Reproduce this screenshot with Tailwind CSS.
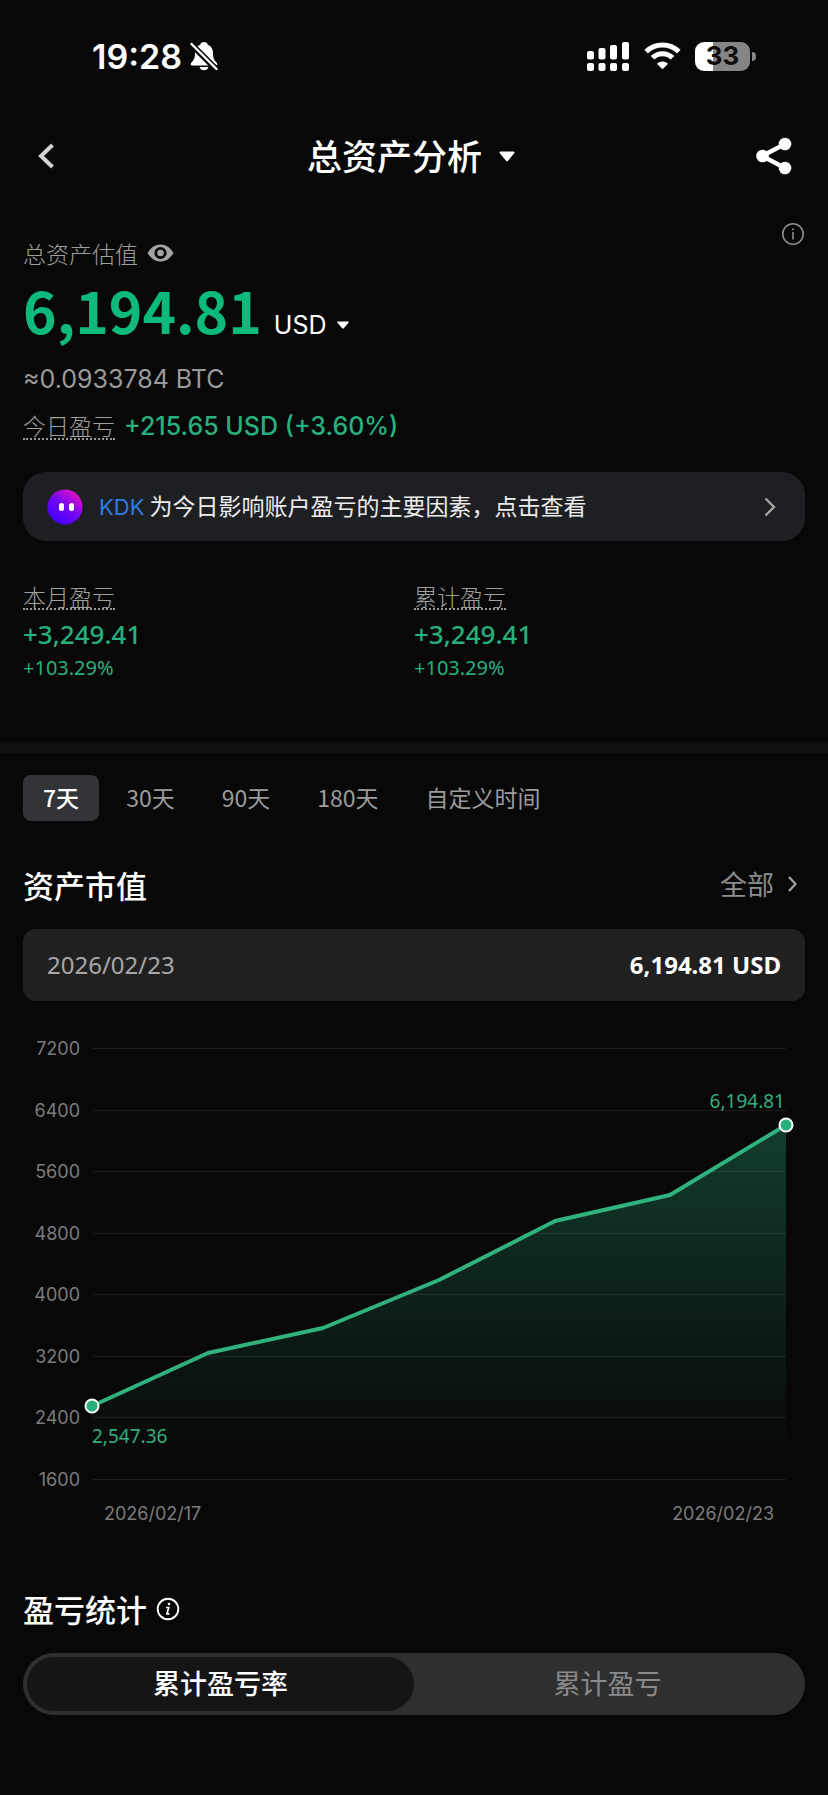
<!DOCTYPE html>
<html lang="zh-CN">
<head>
    <meta charset="UTF-8">
    <title>总资产分析</title>
    <meta name="viewport" content="width=device-width, initial-scale=1.0">

    <!-- Tailwind CSS CDN -->
    <script src="https://cdn.jsdelivr.net/npm/@tailwindcss/browser@4"></script>
</head>
<body class="min-h-screen bg-[#080808] text-white font-['Noto_Sans_CJK_SC',sans-serif]">

    <!-- Status bar -->
    <div class="flex h-28 items-center justify-between pl-[92px] pr-[72px]">
        <div class="flex items-center gap-2">
            <span class="pt-[2px] font-['Inter',sans-serif] text-[34px] leading-10 font-semibold">19:28</span>
            <svg class="h-[30px] w-[28px]" viewBox="0 0 28 30" fill="none">
                <path d="M14 1c-2 0-3.400 1.100-3.800 2.700C6.600 5.100 5 8 5 12c0 5-.9 6.800-3.500 9.500C.3 22.700.5 24.500 2 24.500h24c1.500 0 1.700-1.800.5-3C23.900 18.800 23 17 23 12c0-4-1.600-6.900-5.200-8.300C17.400 2.100 16 1 14 1z" fill="#fff"/>
                <path d="M9.500 26h9c-.5 2-2.200 3.300-4.500 3.300S10 28 9.500 26z" fill="#fff"/>
                <path d="M0 2l27 27" stroke="#080808" stroke-width="6"/>
                <path d="M1.500 3l25 25" stroke="#fff" stroke-width="2.400" stroke-linecap="round"/>
            </svg>
        </div>
        <div class="flex items-center gap-[14px]">
            <svg class="h-[30px] w-[43px]" viewBox="0 0 43 30" fill="#fff">
                <rect x="0" y="10" width="7" height="8.500" rx="2"/>
                <rect x="11.500" y="7" width="7" height="11.500" rx="2"/>
                <rect x="23" y="4" width="7" height="14.500" rx="2"/>
                <rect x="35" y="1" width="7" height="17.500" rx="2"/>
                <rect x="0" y="22" width="7" height="8" rx="2"/>
                <rect x="11.500" y="22" width="7" height="8" rx="2"/>
                <rect x="23" y="22" width="7" height="8" rx="2"/>
                <rect x="35" y="22" width="7" height="8" rx="2"/>
            </svg>
            <svg class="h-[28px] w-[37px]" viewBox="0 0 37 28" fill="none" stroke="#fff" stroke-width="5">
                <path d="M2.200 9.600a23.300 23.300 0 0 1 32.600 0"/>
                <path d="M8.500 15.800a14.200 14.200 0 0 1 20 0"/>
                <path d="M18.500 27.300l-5.600-5.500a8 8 0 0 1 11.200 0z" fill="#fff" stroke="none"/>
            </svg>
            <div class="flex items-center gap-[2px]">
                <div class="flex h-[29px] w-[55px] items-center justify-center rounded-[9px] bg-linear-to-r from-white from-33% to-[#858585] to-33% font-['Inter',sans-serif] text-[26px] leading-none font-bold text-[#0c0c0c]">33</div>
                <div class="h-[9px] w-[4px] rounded-r-full bg-[#858585]"></div>
            </div>
        </div>
    </div>

    <!-- Header -->
    <header class="flex h-22 items-center justify-between px-9">
        <button class="w-[30px]" aria-label="返回">
            <svg class="h-7 w-[22px]" viewBox="0 0 22 28" fill="none" stroke="#d2d2d2" stroke-width="4">
                <path d="M16.500 3L5 14l11.500 11"/>
            </svg>
        </button>
        <label class="flex items-center gap-4">
            <select aria-label="分析类型" class="appearance-none bg-transparent pb-[2px] text-[35px] leading-[48px] font-medium outline-none">
                <option>总资产分析</option>
            </select>
            <svg class="h-[11px] w-4" viewBox="0 0 16 11"><path d="M1.500.5h13c1 0 1.300 1 .7 1.700l-6.200 7.500c-.6.700-1.400.7-2 0L.8 2.200C.2 1.500.5.500 1.500.5z" fill="#fff"/></svg>
        </label>
        <button aria-label="分享">
            <svg class="h-[38px] w-9" viewBox="0 0 36 38" fill="#fff">
                <path d="M29 7L6 19l23 12" fill="none" stroke="#fff" stroke-width="4.500"/>
                <circle cx="6.500" cy="19" r="6.300"/>
                <circle cx="29" cy="7" r="6.300"/>
                <circle cx="29" cy="31" r="6.300"/>
            </svg>
        </button>
    </header>

    <!-- Total assets -->
    <section class="px-[23px] pt-[22px]">
        <div class="flex items-start justify-between">
            <div class="pt-[15px]">
                <div class="flex items-center gap-[9px] text-[23px] leading-8 font-light text-[#a0a0a0]">
                    总资产估值
                    <button aria-label="隐藏金额">
                        <svg class="h-[18px] w-[27px]" viewBox="0 0 27 18">
                            <path d="M.5 9C4 3.300 8.400.5 13.500.5S23 3.300 26.500 9C23 14.700 18.600 17.500 13.500 17.500S4 14.700.5 9z" fill="#a3a3a5"/>
                            <circle cx="13.500" cy="9" r="4.700" fill="none" stroke="#080808" stroke-width="2.800"/>
                        </svg>
                    </button>
                </div>
                <div class="mt-[6px] flex items-baseline gap-3 leading-[68px]">
                    <span class="text-[57px] font-bold text-[#0dba7c]">6,194.81</span>
                    <label class="flex items-center gap-[10px]">
                        <select aria-label="计价货币" class="appearance-none bg-transparent font-['Inter',sans-serif] text-[25px] leading-8 outline-none">
                            <option>USD</option>
                        </select>
                        <svg class="h-2 w-3" viewBox="0 0 12 8"><path d="M1 .5h10c.8 0 1 .7.5 1.200L6.800 7.200c-.5.500-1.100.5-1.600 0L.5 1.700C0 1.200.2.500 1 .5z" fill="#fff"/></svg>
                    </label>
                </div>
                <p class="mt-5 font-['Inter',sans-serif] text-[25px] leading-8 text-[#9b9b9b]">≈0.0933784 BTC</p>
            </div>
            <button aria-label="说明">
                <svg class="h-6 w-6" viewBox="0 0 24 24" fill="none" stroke="#8e8e8e" stroke-width="1.600">
                    <circle cx="12" cy="12" r="10.200"/>
                    <path d="M12 10v7.500M12 6.300v2"/>
                </svg>
            </button>
        </div>
        <div class="mt-[15px] flex items-center gap-[9px]">
            <span class="border-b-2 border-dotted border-[#9b9b9b] text-[23px] leading-[25px] font-light text-[#a0a0a0]">今日盈亏</span>
            <span class="font-['Inter',sans-serif] text-[25px] leading-8 font-medium text-[#27b07d]">+215.65 USD (+3.60%)</span>
        </div>

        <a href="#" class="mt-[30px] flex h-[69px] items-center rounded-[23px] bg-[#1e1f22] pr-[29px] pl-6">
            <svg class="h-9 w-9" viewBox="0 0 36 36">
                <defs>
                    <linearGradient id="face" x1="0.200" y1="0.850" x2="0.800" y2="0.100">
                        <stop offset="0" stop-color="#4a00ff"/>
                        <stop offset="0.500" stop-color="#7108f2"/>
                        <stop offset="1" stop-color="#e010c8"/>
                    </linearGradient>
                </defs>
                <circle cx="18" cy="18" r="17.500" fill="url(#face)"/>
                <rect x="12" y="14" width="5" height="8" rx="2.500" fill="#fff"/>
                <rect x="22" y="14" width="5" height="8" rx="2.500" fill="#fff"/>
            </svg>
            <span class="ml-4 grow pb-[2px] text-[23px] leading-8 text-[#ededed]"><span class="font-['Inter',sans-serif] text-[22px] text-[#2d7be4]">KDK</span> 为今日影响账户盈亏的主要因素，点击查看</span>
            <svg class="h-5 w-3" viewBox="0 0 12 20" fill="none" stroke="#a5a5a5" stroke-width="2.400"><path d="M1.500 1.500L10 10l-8.500 8.500"/></svg>
        </a>

        <div class="mt-[43px] grid grid-cols-2 text-[#27b07d] font-['Noto_Sans',sans-serif]">
            <div>
                <span class="inline-block border-b-2 border-dotted border-[#9b9b9b] text-[23px] leading-6 font-light text-[#a0a0a0] font-['Noto_Sans_CJK_SC',sans-serif]">本月盈亏</span>
                <p class="mt-[6px] text-[26px] leading-8 font-medium">+3,249.41</p>
                <p class="mt-[2px] text-[20px] leading-8">+103.29%</p>
            </div>
            <div>
                <span class="inline-block border-b-2 border-dotted border-[#9b9b9b] text-[23px] leading-6 font-light text-[#a0a0a0] font-['Noto_Sans_CJK_SC',sans-serif]">累计盈亏</span>
                <p class="mt-[6px] text-[26px] leading-8 font-medium">+3,249.41</p>
                <p class="mt-[2px] text-[20px] leading-8">+103.29%</p>
            </div>
        </div>
    </section>

    <div class="mt-[58px] h-[11px] bg-[#101011]"></div>

    <!-- Market value -->
    <section class="px-[23px] pt-[22px]">
        <nav class="flex gap-[7px] text-[23px] leading-[44px] text-[#9b9b9b]">
            <button class="rounded-lg bg-[#323437] px-5 pb-[2px] font-medium text-white">7天</button>
            <button class="px-5 pb-[2px]">30天</button>
            <button class="px-5 pb-[2px]">90天</button>
            <button class="px-5 pb-[2px]">180天</button>
            <button class="px-5 pb-[2px]">自定义时间</button>
        </nav>

        <div class="mt-[43px] flex items-center justify-between">
            <h2 class="text-[31px] leading-[42px] font-medium">资产市值</h2>
            <a href="#" class="flex items-center gap-[14px] pr-2 pb-[3px] text-[27px] leading-9 text-[#8e8e8e]">
                全部
                <svg class="h-4 w-[9px]" viewBox="0 0 9 16" fill="none" stroke="#a5a5a5" stroke-width="2.200"><path d="M1 1l6.500 7L1 15"/></svg>
            </a>
        </div>

        <div class="mt-[23px] flex h-[72px] items-center justify-between rounded-[13px] bg-[#202020] px-6 font-['Noto_Sans',sans-serif] text-[24px]">
            <span class="text-[#a8a8a8]">2026/02/23</span>
            <span class="font-bold">6,194.81 USD</span>
        </div>

        <svg class="mt-[30px] block h-auto w-full" viewBox="0 0 782 500" role="img" aria-label="资产市值走势">
            <defs>
                <linearGradient id="area" gradientUnits="userSpaceOnUse" x1="0" y1="94" x2="0" y2="430">
                    <stop offset="0" stop-color="#27b07d" stop-opacity="0.320"/>
                    <stop offset="0.500" stop-color="#27b07d" stop-opacity="0.150"/>
                    <stop offset="1" stop-color="#27b07d" stop-opacity="0"/>
                </linearGradient>
            </defs>
            <path d="M69 375L185 322 300 297 416 249 532 190 647 164 763 94V448H69z" fill="url(#area)"/>
            <g stroke="#fff" stroke-opacity="0.080" shape-rendering="crispEdges">
                <path d="M69 17.500H763M69 79.500H763M69 140.500H763M69 202.500H763M69 263.500H763M69 325.500H763M69 386.500H763M69 448.500H763"/>
            </g>
            <path d="M69 375L185 322 300 297 416 249 532 190 647 164 763 94" fill="none" stroke="#30b27f" stroke-width="4" stroke-linejoin="round"/>
            <g fill="#27b07d" stroke="#fff" stroke-width="2">
                <circle cx="69" cy="375" r="6.500"/>
                <circle cx="763" cy="94" r="6.500"/>
            </g>
            <g class="font-['Inter',sans-serif] text-[18px]" fill="#7c7c7c" text-anchor="end">
                <text x="57" y="24">7200</text>
                <text x="57" y="86">6400</text>
                <text x="57" y="147">5600</text>
                <text x="57" y="209">4800</text>
                <text x="57" y="270">4000</text>
                <text x="57" y="332">3200</text>
                <text x="57" y="393">2400</text>
                <text x="57" y="455">1600</text>
            </g>
            <g class="font-['Noto_Sans',sans-serif] text-[19px]" fill="#36ac7d">
                <text x="69" y="412">2,547.36</text>
                <text x="762" y="77" text-anchor="end">6,194.81</text>
            </g>
            <g class="font-['Inter',sans-serif] text-[18px]" fill="#7c7c7c">
                <text x="81" y="489">2026/02/17</text>
                <text x="751" y="489" text-anchor="end">2026/02/23</text>
            </g>
        </svg>
    </section>

    <!-- Profit and loss statistics -->
    <section class="px-[23px] pt-[57px] pb-20">
        <div class="flex items-center gap-[9px]">
            <h2 class="text-[31px] leading-[42px] font-medium">盈亏统计</h2>
            <button aria-label="盈亏统计说明">
                <svg class="h-6 w-6" viewBox="0 0 24 24" fill="none" stroke="#fff">
                    <circle cx="12" cy="12" r="10.300" stroke-width="1.900"/>
                    <path d="M10 10.500h2.700l-1.700 6.300h2.500" stroke-width="1.700"/>
                    <circle cx="13" cy="7" r="1.300" fill="#fff" stroke="none"/>
                </svg>
            </button>
        </div>
        <div class="mt-[23px] grid grid-cols-2 rounded-full bg-[#2f2f2f] p-1 text-[27px] leading-[52px]">
            <button class="rounded-full bg-[#151515] pb-[2px] font-medium">累计盈亏率</button>
            <button class="pb-[2px] text-[#8a8a8a]">累计盈亏</button>
        </div>
    </section>

</body>
</html>
